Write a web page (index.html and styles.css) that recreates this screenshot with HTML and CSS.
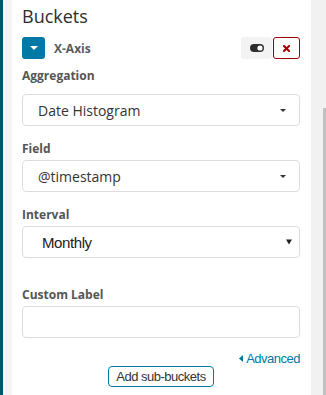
FILE: index.html
```html
<!DOCTYPE html>
<html lang="en">
<head>
  <meta charset="UTF-8">
  <title>Buckets</title>
  <link rel="stylesheet" href="styles.css">
</head>
<body>
  <div class="app">
    <div class="edge"></div>
    <div class="sidebar">
      <div class="panel">
        <h2>Buckets</h2>
        <div class="agg-head">
          <button class="toggle-btn" aria-label="Collapse">
            <svg width="8" height="4" viewBox="0 0 8 4"><path d="M0 0h8L4 4z" fill="#fff"/></svg>
          </button>
          <span class="agg-title">X-Axis</span>
          <button class="icon-btn enable-btn" aria-label="Disable">
            <svg width="14" height="8" viewBox="0 0 14 8"><rect x="0" y="0" width="14" height="8" rx="4" fill="#2d2d2d"/><circle cx="10" cy="4" r="2.6" fill="#fff"/></svg>
          </button>
          <button class="icon-btn remove-btn" aria-label="Remove">
            <svg width="7" height="7" viewBox="0 0 7 7"><path d="M1 1l5 5M6 1L1 6" stroke="#a30000" stroke-width="2" stroke-linecap="square"/></svg>
          </button>
        </div>

        <label class="field-label first">Aggregation</label>
        <div class="select">
          <span>Date Histogram</span>
          <svg class="caret" width="6" height="3" viewBox="0 0 6 3"><path d="M0 0h6L3 3z" fill="#333"/></svg>
        </div>

        <label class="field-label">Field</label>
        <div class="select">
          <span>@timestamp</span>
          <svg class="caret" width="6" height="3" viewBox="0 0 6 3"><path d="M0 0h6L3 3z" fill="#333"/></svg>
        </div>

        <label class="field-label">Interval</label>
        <div class="select native">
          <span>Monthly</span>
          <svg class="caret" width="6" height="6" viewBox="0 0 6 6"><path d="M0 0.5h6L3 5.5z" fill="#222"/></svg>
        </div>

        <label class="field-label spaced">Custom Label</label>
        <div class="text-input"></div>

        <div class="advanced-row">
          <a class="advanced" href="#"><svg width="4" height="7" viewBox="0 0 4 7"><path d="M4 0v7L0 3.5z" fill="#0079a5"/></svg>Advanced</a>
        </div>
        <div class="add-row">
          <button class="add-btn">Add sub-buckets</button>
        </div>
      </div>
      <div class="gutter"><div class="thumb"></div></div>
    </div>
  </div>
</body>
</html>
```

FILE: styles.css
```css
html, body { margin: 0; padding: 0; height: 100%; }
body { font-family: "Open Sans", sans-serif; color: #333; overflow: hidden; }
.app { display: flex; height: 395px; }
.edge { width: 3px; background: #005571; }
.sidebar { flex: 1; display: flex; background: #f5f5f5; padding-left: 9px; }
.panel { width: 299px; box-sizing: border-box; background: #fff; padding: 4px 11px 0 10px; }
.gutter { flex: 1; background: #f1f1f1; display: flex; justify-content: flex-end; }
.thumb { width: 3px; margin-top: 108px; background: #c1c1c1; }

h2 { margin: 0; font-size: 18px; line-height: 24px; font-weight: 400; color: #2d2d2d; }

.agg-head { display: flex; align-items: center; height: 22px; margin-top: 9px; }
.toggle-btn { width: 23px; height: 22px; border: none; border-radius: 3px; background: #0079a5; padding: 0; display: flex; align-items: center; justify-content: center; }
.agg-title { margin-left: 9px; font-size: 12px; font-weight: 700; color: #5a5a5a; }
.icon-btn { height: 22px; padding: 0; box-sizing: border-box; border-radius: 3px; display: flex; align-items: center; justify-content: center; }
.enable-btn { margin-left: auto; width: 31px; border: none; background: #f3f3f3; }
.remove-btn { width: 27px; margin-left: 1px; border: 1px solid #a30000; background: #fff; }

.field-label { display: block; font-size: 12px; line-height: 17px; font-weight: 700; color: #555; margin-top: 14px; margin-bottom: 3px; }
.field-label.first { margin-top: 8px; margin-bottom: 10px; }
.field-label.spaced { margin-top: 28px; }

.select { height: 32px; box-sizing: border-box; border: 1px solid #ddd; border-radius: 4px; display: flex; align-items: center; padding: 0 13px 0 15px; font-size: 14px; color: #333; }
.select span { flex: 1; }
.select.native { padding-left: 19px; padding-right: 7px; font-family: "Liberation Sans", Arial, sans-serif; font-size: 15px; letter-spacing: -0.4px; color: #222; }
.select.native span { padding-top: 1px; }

.text-input { height: 32px; box-sizing: border-box; border: 1px solid #ddd; border-radius: 4px; }

.advanced-row { display: flex; justify-content: flex-end; margin-top: 13px; }
.advanced { display: flex; align-items: center; gap: 3px; font-family: "Liberation Sans", Arial, sans-serif; font-size: 13px; line-height: 15px; letter-spacing: -0.5px; color: #0079a5; text-decoration: none; }
.add-row { display: flex; justify-content: center; }
.add-btn { width: 106px; height: 21px; padding: 0; border: 1px solid #0079a5; border-radius: 4px; background: #fff; font-family: "Liberation Sans", Arial, sans-serif; font-size: 13px; letter-spacing: -0.5px; color: #333; }
```
